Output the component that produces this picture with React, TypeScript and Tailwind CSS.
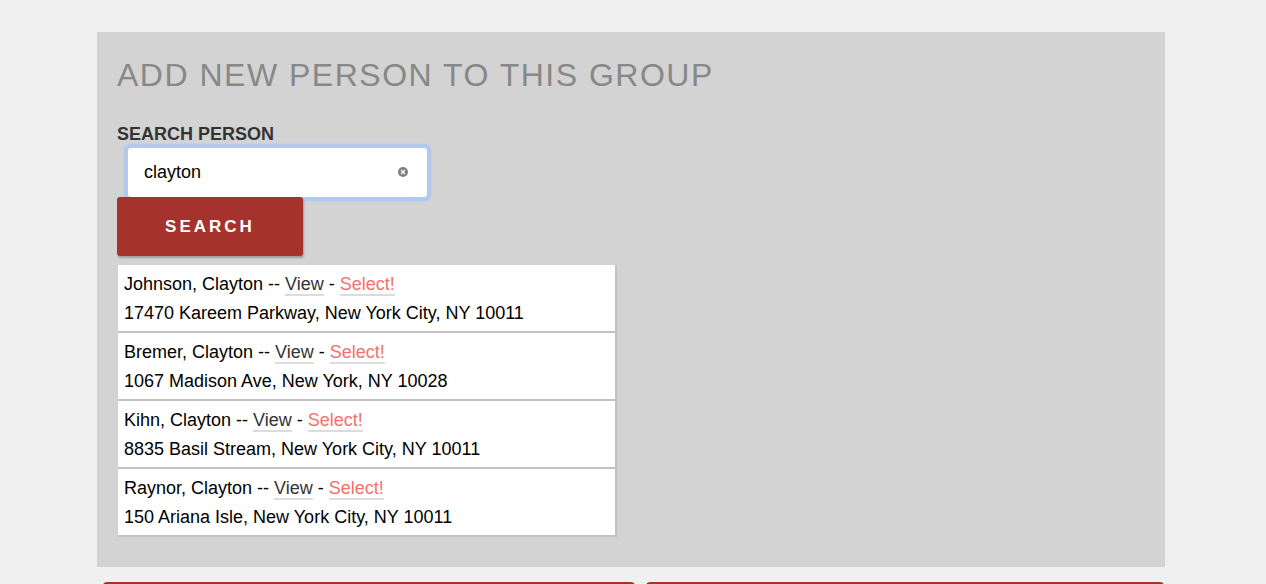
import React, { useState } from 'react';

interface Person {
  id: number;
  name: string;
  address: string;
}

const results: Person[] = [
  { id: 1, name: 'Johnson, Clayton', address: '17470 Kareem Parkway, New York City, NY 10011' },
  { id: 2, name: 'Bremer, Clayton', address: '1067 Madison Ave, New York, NY 10028' },
  { id: 3, name: 'Kihn, Clayton', address: '8835 Basil Stream, New York City, NY 10011' },
  { id: 4, name: 'Raynor, Clayton', address: '150 Ariana Isle, New York City, NY 10011' },
];

function ResultRow({ person }: { person: Person }) {
  return (
    <li className="bg-white pl-[6px] pt-[5px] pb-[3px] text-[18px] leading-[29px] text-black border-b-2 border-r-2 border-[#c2c2c2]">
      <div>
        {person.name} --{' '}
        <a href="#" className="text-[#333] border-b-2 border-[#dcdcdc]">View</a>
        {' - '}
        <a href="#" className="text-[#f3716d] border-b-2 border-[#dcdcdc]">Select!</a>
      </div>
      <div>{person.address}</div>
    </li>
  );
}

export default function App() {
  const [query, setQuery] = useState('clayton');

  return (
    <div className="h-[584px] overflow-hidden bg-[#f0f0f0] pt-[32px] font-['Liberation_Sans',Arial,sans-serif]">
      <div className="ml-[97px] w-[1068px] bg-[#d3d3d3] pl-[20px] pt-[25px] pb-[30px]">
        <h2 className="text-[32px] leading-[36px] tracking-[1.5px] text-[#888] uppercase">Add new person to this group</h2>

        <label className="block mt-[31px] text-[18px] leading-[20px] font-bold text-[#333] uppercase">Search person</label>
        <div className="relative ml-[11px] mt-[4px] w-[299px] h-[49px] rounded-[3px] bg-white shadow-[0_0_0_4px_#b3c8ea,0_0_1px_5px_#bfd1ee]">
          <input
            type="text"
            value={query}
            onChange={e => setQuery(e.target.value)}
            className="w-full h-full bg-transparent pl-[16px] pr-[36px] text-[18px] text-black outline-none"
          />
          {query && (
            <button
              onClick={() => setQuery('')}
              className="absolute right-[19px] top-[19px] w-[10px] h-[10px] rounded-full bg-[#808080] flex items-center justify-center"
              title="Clear"
            >
              <svg width="6" height="6" viewBox="0 0 6 6">
                <path d="M1 1L5 5M5 1L1 5" stroke="white" strokeWidth="1.3" />
              </svg>
            </button>
          )}
        </div>
        <button className="relative block w-[186px] h-[59px] rounded-[3px] bg-[#a5322d] text-white text-[17px] font-bold tracking-[3px] uppercase shadow-[1px_2px_2px_rgba(0,0,0,0.25)]">
          Search
        </button>

        <ul className="mt-[9px] ml-[1px] w-[499px]">
          {results.map(p => (
            <ResultRow key={p.id} person={p} />
          ))}
        </ul>
      </div>

      <div className="flex mt-[15px] ml-[103px]">
        <div className="w-[532px] h-[60px] rounded-t-[4px] bg-[#a5322d]" />
        <div className="ml-[11px] w-[518px] h-[60px] rounded-t-[4px] bg-[#a5322d]" />
      </div>
    </div>
  );
}
